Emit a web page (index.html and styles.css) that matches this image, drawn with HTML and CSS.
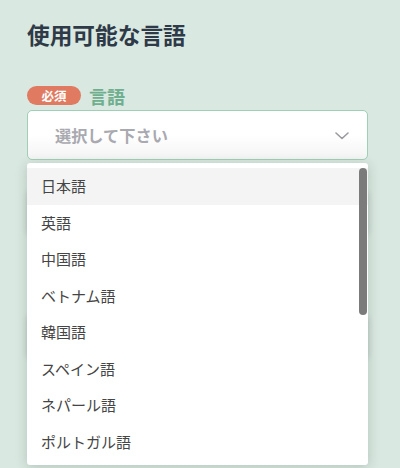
FILE: index.html
```html
<!DOCTYPE html>
<html lang="ja">
<head>
<meta charset="utf-8">
<link rel="stylesheet" href="styles.css">
</head>
<body>
<main class="page">
  <h1 class="title">使用可能な言語</h1>
  <div class="field">
    <div class="label-row">
      <span class="badge">必須</span>
      <span class="label">言語</span>
    </div>
    <div class="select-wrap">
      <div class="select">
        <span class="placeholder">選択して下さい</span>
        <svg class="chevron" width="14" height="8" viewBox="0 0 14 8"><path d="M1 1l6 5.5L13 1" fill="none" stroke="#9a9aa0" stroke-width="1.6" stroke-linecap="round" stroke-linejoin="round"/></svg>
      </div>
      <ul class="menu">
        <li class="item active">日本語</li>
        <li class="item">英語</li>
        <li class="item">中国語</li>
        <li class="item">ベトナム語</li>
        <li class="item">韓国語</li>
        <li class="item">スペイン語</li>
        <li class="item">ネパール語</li>
        <li class="item">ポルトガル語</li>
        <li class="scrollbar"></li>
      </ul>
    </div>
  </div>
  <div class="under-field"></div>
  <div class="under-field second"></div>
  <div class="under-strip"></div>
</main>
</body>
</html>
```
FILE: styles.css
```css
* { box-sizing: border-box; }
html, body { margin: 0; padding: 0; }
body {
  background: #d9e8e0;
  font-family: "Noto Sans CJK JP", "Noto Sans", sans-serif;
  width: 400px;
  height: 468px;
  overflow: hidden;
}
.page {
  padding: 21px 32px 0 27px;
}
.title {
  margin: 0;
  font-size: 22.7px;
  line-height: 28px;
  font-weight: 700;
  color: #2f3a48;
}
.field {
  margin-top: 34.5px;
}
.label-row {
  display: flex;
  align-items: center;
  gap: 8px;
  height: 24px;
}
.badge {
  display: inline-flex;
  align-items: center;
  justify-content: center;
  width: 54px;
  height: 19px;
  border-radius: 10px;
  background: #e07a60;
  color: #fff;
  font-size: 12.5px;
  font-weight: 700;
}
.label {
  font-size: 18px;
  font-weight: 700;
  color: #6fae8e;
}
.select-wrap {
  position: relative;
  margin-top: 2.5px;
}
.select {
  display: flex;
  align-items: center;
  justify-content: space-between;
  height: 50px;
  padding: 0 18px 0 27px;
  border: 1.5px solid #9fd0b6;
  border-radius: 5px;
  background: linear-gradient(#ffffff 50%, #f4f4f4);
}
.placeholder {
  font-size: 16.2px;
  font-weight: 700;
  color: #a9a9b0;
}
.chevron { display: block; margin-top: 2px; }
.menu {
  position: absolute;
  left: 0;
  right: 0;
  top: 53px;
  margin: 0;
  padding: 5px 0 0;
  list-style: none;
  background: #fff;
  height: 302px;
  border-radius: 3px;
  box-shadow: 0 2px 12px rgba(40, 70, 60, 0.22);
  overflow: hidden;
  z-index: 2;
}
.item {
  height: 36.57px;
  line-height: 36.57px;
  padding-left: 14px;
  font-size: 15px;
  color: #454545;
}
.item.active { background: #f4f4f4; }
.scrollbar {
  position: absolute;
  top: 5px;
  right: 1px;
  width: 8px;
  height: 147px;
  border-radius: 4px;
  background: #7b7b7b;
}
.under-field {
  margin-top: 30px;
  height: 44px;
  border-radius: 5px;
  background: #fff;
  box-shadow: 0 1px 6px rgba(0,0,0,0.15);
}
.under-field.second { margin-top: 80px; }
.under-strip {
  margin-top: 48px;
  width: 54px;
  height: 6px;
  border-radius: 3px;
  background: #9aa3a0;
}
```
